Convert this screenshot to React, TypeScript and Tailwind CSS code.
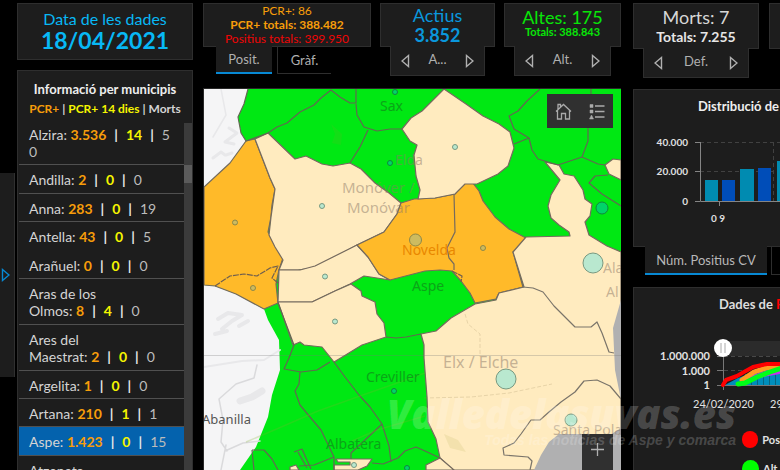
import type { ReactNode } from "react";

type Town = { name: string; pcr?: string; recent?: string; deaths?: string; row: string };

const towns: Town[] = [
  { name: "Alzira:", pcr: "3.536", recent: "14", deaths: "5 0", row: "h-[42px] pt-[3px] border-[#505050]" },
  { name: "Andilla:", pcr: "2", recent: "0", deaths: "0", row: "h-[29px] pt-1.5 border-[#505050]" },
  { name: "Anna:", pcr: "283", recent: "0", deaths: "19", row: "h-[28px] pt-1.5 border-[#505050]" },
  { name: "Antella:", pcr: "43", recent: "0", deaths: "5", row: "h-[29px] pt-1.5 border-transparent" },
  { name: "Arañuel:", pcr: "0", recent: "0", deaths: "0", row: "h-[28px] pt-1.5 border-[#505050]" },
  { name: "Aras de los Olmos:", pcr: "8", recent: "4", deaths: "0", row: "h-[46px] pt-1.5 border-[#505050]" },
  { name: "Ares del Maestrat:", pcr: "2", recent: "0", deaths: "0", row: "h-[46px] pt-1.5 border-[#505050]" },
  { name: "Argelita:", pcr: "1", recent: "0", deaths: "0", row: "h-[28px] pt-1.5 border-[#505050]" },
  { name: "Artana:", pcr: "210", recent: "1", deaths: "1", row: "h-[28px] pt-1.5 border-[#505050]" },
  { name: "Aspe:", pcr: "1.423", recent: "0", deaths: "15", row: "h-[29px] pt-1.5 border-[#505050] bg-[#0462ad]" },
  { name: "Atzeneta", row: "h-[28px] pt-1.5 border-[#505050]" },
];

const panel = "border border-[#2e2e2e] bg-[#1d1d1d]";

function Arrow({ left }: { left?: boolean }) {
  return (
    <svg width="9" height="14" viewBox="0 0 9 14" fill="none" stroke="currentColor" strokeWidth="1.4" aria-hidden="true">
      <path d={left ? "M7.5 1.5V12.5L1 7Z" : "M1.5 1.5V12.5L8 7Z"} />
    </svg>
  );
}

function Pager({ label }: { label: string }) {
  return (
    <div className="mx-2.5 -mt-px flex h-[30px] items-center justify-between border border-t-0 border-[#2e2e2e] bg-[#1d1d1d] px-2.5 text-[#b0b0b0]">
      <button type="button" aria-label="Anterior"><Arrow left /></button>
      <span className="pb-1 text-[13px] leading-4">{label}</span>
      <button type="button" aria-label="Següent"><Arrow /></button>
    </div>
  );
}

function StatCard({ children, label, className }: { children: ReactNode; label: string; className: string }) {
  return (
    <section>
      <div className={`${panel} text-center ${className}`}>{children}</div>
      <Pager label={label} />
    </section>
  );
}

function Separator() {
  return <span className="mx-2 font-bold text-[#e8e8e8]">|</span>;
}

const GREEN = "#00e813";
const CREAM = "#ffebbf";
const ORANGE = "#ffba29";

function MapDrawing() {
  return (
    <svg className="block h-full w-full" viewBox="204 89 417 381" preserveAspectRatio="xMidYMin slice" role="img" aria-label="Mapa de municipis">
      <rect x="204" y="89" width="417" height="381" fill={GREEN} />
      <path d="M204 89H248L244 104 238 117 241 133 246 141 230 163 204 187Z" fill="#f5f5f6" />
      <path d="M204 285L215 286 236 294 264 309 268 320 279 340 280 370 272 395 268 417 256 447 240 470H204Z" fill="#f5f5f6" />
      <g fill="none" stroke="#e8e8ea" strokeLinecap="round" strokeLinejoin="round">
        <path d="M221 89l5 26-13 22" strokeWidth="1.5" />
        <path d="M229 128l8 5-12 9 9 2M213 158l8-6 4 3M226 155l6-2" strokeWidth="3" />
        <path d="M218 319l10-6 14 2-10 6-10 8M248 321l-9 5M215 334l12-3" strokeWidth="4" />
        <path d="M280 350l-16 10-22 1-38 6" strokeWidth="2" />
        <path d="M240 401l12-4 10-6" strokeWidth="7" />
        <path d="M257 365l-3 13-18 6-17 15 4 21-2 22 6 9M225 451l18-8 17-2M226 445l-5 25" stroke="#dadadc" strokeWidth="1.5" />
      </g>

      <g stroke="#756a5e" strokeWidth="1.2" strokeLinejoin="round">
        <path d="M204 187L230 163 246 141 255 139 270 178 275 189 272 205 271 217 268 232 274 242 283 258 279 270 276 284 278 303 264 309 236 294 215 286 204 285Z" fill={ORANGE} />
        <path d="M255 139L268 133 295 159 306 156 322 164 333 166 350 163 361 169 375 183 389 193 401 203 397 214 384 232 357 245 326 262 312 268 298 270 279 270 283 260 275 247 269 235 271 217 275 189 270 178Z" fill={CREAM} />
        <path d="M279 270H300L315 266 357 245 368 257 379 274 390 280 364 276 350 284 335 291 312 302 278 302Z" fill={CREAM} />
        <path d="M278 302H312L335 291 351 284 361 291 362 296 375 302 377 314 384 323 386 337 362 345 344 356 334 362 322 347 304 345 300 342 293 345Z" fill={CREAM} />
        <path d="M357 245L384 232 397 214 401 203 414 199 435 198 455 194 463 184 472 182 479 191 483 201 495 217 509 229 526 238 520 247 513 252 523 287 499 293 496 299 475 303 470 293 461 281 452 271 440 270 425 271 390 280 379 274 368 257Z" fill={ORANGE} />
        <path d="M418 199L420 190 416 176 414 155 417 145 410 141 402 129 411 118 422 111 444 89 466 104 483 116 499 124 510 132 514 148 508 166 498 174 477 184 465 184 455 194 435 198Z" fill={CREAM} />
        <path d="M545 162L559 165 564 174 574 176 583 190 585 199 592 204 590 216 585 222 589 235 607 246 621 252V470H453L440 458 436 439 428 422 427 397 424 358 424 345 421 334 436 331 451 318 475 304 496 300 499 293 524 287 513 252 526 237 570 236 569 232 559 225 551 218 548 206 551 195 560 180Z" fill={CREAM} />
        <path d="M621 160L613 159 605 165 609 174 621 180Z" fill={CREAM} />
        <path d="M440 458L426 465V470H454Z" fill={CREAM} />
        <path d="M336 459H372L367 466 358 470H334V465H350V462H338Z" fill={CREAM} />
        <path d="M290 467l6-2 3 5h-9Z" fill={CREAM} />
      </g>
      <path d="M454 194L455 232 447 248 449 258 454 264 454 270" fill="none" stroke="#756a5e" strokeWidth="1.2" />

      <path d="M621 300L613 328 615 370 621 400ZM621 428L610 435 583 434 559 434 549 442 541 455 534 470H621Z" fill="#b0b0b1" />
      <path d="M204 355.500H621" stroke="#777" strokeOpacity=".3" />

      <g fill="none" stroke="#626852" strokeWidth="1.2" strokeLinejoin="round">
        <path d="M248 89L244 104 238 117 241 133 246 141 268 133 277 127 287 123 300 112 314 105 321 98 331 90 340 97 350 103H356V89M356 104L357 115 364 127 377 131 390 129 402 129M368 130L360 147 350 163" />
        <path d="M540 89L527 101 518 111 509 116 514 129 529 138 532 150 538 159 558 165 582 157 588 141 588 125 584 110 591 100V89M514 144L529 138M582 157L598 164 605 165M608 175L595 176 589 183 602 194 621 206" />
        <path d="M278 303L294 345 289 358 284 369 301 372 317 370 330 362M300 372L299 384 295 391 300 405 310 417 321 430 334 457M334 362L345 377 359 395 370 407 382 424 389 446 391 462M386 337L396 338 406 337 421 334M382 424L365 440 351 453V459M440 458L425 451 416 447 405 451 398 458 383 464 372 463M334 457L314 465 299 466M334 457V470M252 450L264 450 272 459 278 470M252 450L254 470M294 452l8-3 9 20M298 452l9 16" />
        <path d="M523 287L533 288 543 292 554 306 575 327 591 327 597 322 602 333 609 352 614 353M621 399L610 386 597 380 584 381 575 392 561 402 549 412 540 420 531 420 521 434 514 443 503 448 504 455 528 457 532 461 530 470" stroke="#7a746a" />
        <path d="M215 286L230 276 244 274 257 276 270 268 278 266 272 278 278 283M452 271L462 276 461 282" stroke="#705f4e" strokeDasharray="6 1" />
      </g>
      <g fill="none" stroke="#7fae30" strokeOpacity=".25">
        <path d="M246 442L279 428 318 411 360 396 400 382 425 373M352 441l25-11 48-14" strokeWidth="1.5" />
        <path d="M465 314l3 10 12 10v23M424 398l47-1 38-4 43-9" stroke="#a08a60" strokeDasharray="4 2" />
      </g>
      <path d="M331 124l11 10-1 11-9-2 3-9ZM444 434l14 6 8 12-16-4Z" fill="#a0a030" fillOpacity=".12" />

      <g fill="#b9e8cf" stroke="#789981">
        <circle cx="322" cy="206" r="2.5" /><circle cx="455" cy="147" r="2.5" /><circle cx="325" cy="276.500" r="2.5" /><circle cx="335" cy="321.500" r="2.5" />
        <circle cx="593" cy="263" r="10" /><circle cx="506" cy="379" r="10" /><circle cx="571" cy="420" r="6" /><circle cx="354" cy="465" r="2.5" />
      </g>
      <g fill="#cdbb60" stroke="#8d8848">
        <circle cx="235" cy="222.500" r="2.5" /><circle cx="253" cy="288" r="2.5" /><circle cx="483" cy="248" r="2.5" /><circle cx="415.500" cy="240" r="6" />
      </g>
      <g fill="#00d469" stroke="#11863f">
        <circle cx="395" cy="92" r="2.5" /><circle cx="390" cy="163" r="2.5" /><circle cx="602" cy="208" r="6" /><circle cx="394" cy="391" r="2.5" /><circle cx="407" cy="468" r="2.5" />
      </g>

      <g fontFamily="'Noto Sans', sans-serif" fontSize="14">
        <g fill="#0ba518">
          <text x="380" y="111">Sax</text><text x="412" y="291">Aspe</text><text x="366" y="382">Creviller</text><text x="326" y="449">Albatera</text>
        </g>
        <g fill="#8c7868" fillOpacity=".5">
          <text x="395" y="165">Elda</text>
          <text x="342" y="193" fontSize="15">Monóver /</text><text x="347" y="213" fontSize="15">Monóvar</text>
          <text x="443" y="368" fontSize="16">Elx / Elche</text>
          <text x="603" y="273">Ala</text><text x="606" y="297">Al</text><text x="553" y="435">Santa Pola</text>
        </g>
        <text x="402" y="255" fill="#e98700">Novelda</text>
        <text x="202" y="424" fill="#555" fontSize="13">Abanilla</text>
      </g>
    </svg>
  );
}

function MapPanel() {
  return (
    <section className="relative min-h-0 flex-1 overflow-hidden border-l border-t border-[#282828]">
      <MapDrawing />
      <div className="absolute right-2 top-[5px] flex h-[34px] w-[66px] items-center justify-around bg-[#303030] text-[#aaa]">
        <button type="button" aria-label="Inici">
          <svg width="17" height="17" viewBox="0 0 17 17" fill="none" stroke="currentColor" strokeWidth="1.3"><path d="M1 8.500L8.500 1.500 16 8.500M2.500 7.500V16H6.500V10.500H10.500V16H14.500V7.500M3 6V1.500H5.500V4" /></svg>
        </button>
        <button type="button" aria-label="Llegenda">
          <svg width="16" height="17" viewBox="0 0 16 17" fill="none" stroke="currentColor"><path d="M6 3H15.500M6 8.500H15.500M6 14H15.500" strokeWidth="1.4" /><path d="M1 1.500h3v3H1ZM1 7h3v3H1ZM2.500 12l2 4h-4Z" fill="currentColor" strokeWidth=".5" /></svg>
        </button>
      </div>
      <button type="button" aria-label="Apropa" className="absolute bottom-0 right-2 flex h-9 w-[31px] items-center justify-center bg-[#303030] pb-1.5 text-[#b0b0b0]">
        <svg width="13" height="13" viewBox="0 0 13 13" stroke="currentColor" strokeWidth="1.3"><path d="M6.500 0V13M0 6.500H13" /></svg>
      </button>
    </section>
  );
}

function BarChart() {
  return (
    <svg className="block w-[147px] max-w-none" height="120" viewBox="634 126 147 120" role="img" aria-label="Distribució per edats">
      <path d="M700 142.500H893M700 171.500H893M773.500 142V201" stroke="#414141" strokeDasharray="4 3" />
      <g fill="#008bb1"><rect x="705" y="180" width="13" height="21" /><rect x="740" y="169" width="14" height="32" /><rect x="777" y="161" width="14" height="40" /></g>
      <g fill="#004db8"><rect x="722" y="180" width="13" height="21" /><rect x="758" y="168" width="13" height="33" /></g>
      <path d="M700.500 142V201.500H893M695 142.500H700M695 171.500H700M695 201.500H700M719.500 201V206" fill="none" stroke="#858585" />
      <g fill="#e0e0e0" fontFamily="Lato, sans-serif" fontSize="10" fontWeight="700">
        <g textAnchor="end"><text x="688" y="146">40.000</text><text x="688" y="175">20.000</text><text x="688" y="205">0</text></g>
        <text x="711" y="222">0 9</text>
      </g>
    </svg>
  );
}

function TrendChart() {
  return (
    <svg className="block w-[147px] max-w-none" height="101" viewBox="634 325 147 101" role="img" aria-label="Evolució de les dades">
      <rect x="723" y="342" width="170" height="15" fill="#2b2b2b" />
      <path d="M717 357.500H893M717 371.500H893" stroke="#484848" strokeDasharray="4 3" />
      <path d="M725 386L738 379 752 374 770 370H893V386Z" fill="#008ebc" />
      <path d="M745.500 375v11M751.500 373v13M757.500 372v14M763.500 371v15M769.500 370v16M775.500 369v17" stroke="#086580" />
      <path d="M723.500 357V391M717 357.500H723M717 371.500H723M717 386.500H893" stroke="#777" />
      <g fill="none" strokeLinejoin="round" strokeLinecap="round">
        <path d="M748 380L765 375 782 372" stroke="#c82ef0" strokeWidth="5" />
        <path d="M742 381L754 373 766 369 782 367" stroke="#ff9d22" strokeWidth="5" />
        <path d="M738 385L745 384 757 378 770 373 782 369" stroke="#00ff17" strokeWidth="5" />
        <path d="M723 386L726 381 737 377 744 373 753 368 767 365 782 365" stroke="#f00" strokeWidth="4" />
      </g>
      <circle cx="723" cy="349" r="9" fill="#fff" /><path d="M721 344v10M725 344v10" stroke="#aaa" />
      <g fill="#e2e2e2" fontFamily="Lato, sans-serif" fontSize="11">
        <g textAnchor="end" fontWeight="700"><text x="710" y="361">1.000.000</text><text x="710" y="376">1.000</text><text x="710" y="390">1</text></g>
        <text x="693" y="409">24/02/2020</text><text x="770" y="409">29</text>
      </g>
    </svg>
  );
}

export default function App() {
  return (
    <main className="relative grid h-screen w-full grid-cols-[15px_178px_minmax(0,428fr)_minmax(0,159fr)] grid-rows-[minmax(0,1fr)] overflow-hidden bg-black font-['Lato','Liberation_Sans',sans-serif] text-[#d4d4d4]">
      <aside className="flex items-center pt-20">
        <button type="button" aria-label="Mostra el panell" className="flex h-[204px] w-full items-center justify-end border-r border-[#303030] bg-[#1d1d1d] pr-1 text-[#0789d4]"><Arrow /></button>
      </aside>

      <div className="flex min-h-0 flex-col gap-2.5 pl-0.5 pt-[3px]">
        <section className={`${panel} h-[57px] shrink-0 pt-1.5 text-center text-[#08b8f5]`}>
          <h1 className="text-base leading-[18px]">Data de les dades</h1>
          <p className="text-[23px] font-bold leading-[25px]">18/04/2021</p>
        </section>
        <section className={`${panel} flex min-h-0 flex-1 flex-col border-b-0 pt-2`}>
          <h2 className="text-center text-[13px] font-bold leading-5 text-[#eee]">Informació per municipis</h2>
          <p className="whitespace-nowrap pb-1 text-center text-xs font-bold leading-5">
            <span className="text-[#f79d0a]">PCR+</span> | <span className="text-[#f5f500]">PCR+ 14 dies</span> | <span>Morts</span>
          </p>
          <div className="flex min-h-0 flex-1">
            <ul className="min-w-0 flex-1 overflow-hidden pl-px">
              {towns.map((t) => (
                <li key={t.name} className={`border-b pl-2.5 pr-2 text-sm leading-[17px] ${t.row}`}>
                  {t.name}
                  {t.pcr && (
                    <>
                      {"\u00a0"}
                      <b className="text-[#f79d0a]">{t.pcr}</b>
                      <Separator />
                      <b className="text-[#f5f500]">{t.recent}</b>
                      <Separator />
                      <span className="text-[#bcbcbc]">{t.deaths}</span>
                    </>
                  )}
                </li>
              ))}
            </ul>
            <div className="w-2 bg-[#3b3b3b] pt-[42px]"><div className="h-[18px] bg-[#5b5b5b]" /></div>
          </div>
        </section>
      </div>

      <div className="flex min-h-0 flex-col pl-2.5 pt-[3px]">
        <div className="grid h-[85px] shrink-0 grid-cols-[168fr_115fr_117fr] gap-[9px]">
          <section>
            <div className={`${panel} h-11 text-center text-xs leading-[14px] text-[#f79d0a]`}>
              <p>PCR+: 86</p>
              <p className="font-bold">PCR+ totals: 388.482</p>
              <p className="text-[#f00505]">Positius totals: 399.950</p>
            </div>
            <div className="-mt-px flex gap-[5px] pl-[13px] text-[13px] leading-6 text-[#b0b0b0]">
              <button type="button" className="h-7 w-14 border-b-2 border-[#0789d4] bg-[#1d1d1d]">Posit.</button>
              <button type="button" className="h-7 w-[54px] border-b border-l border-[#2e2e2e]">Gràf.</button>
            </div>
          </section>
          <StatCard label="A..." className="h-11 pt-px text-[#0a97dc]">
            <p className="text-lg leading-5">Actius</p>
            <p className="text-lg font-bold leading-5">3.852</p>
          </StatCard>
          <StatCard label="Alt." className="h-11 pt-1 text-[#08e508]">
            <p className="text-lg leading-[18px]">Altes: 175</p>
            <p className="text-[11px] font-bold leading-3">Totals: 388.843</p>
          </StatCard>
        </div>
        <MapPanel />
      </div>

      <div className="flex min-h-0 flex-col overflow-hidden pl-3 pt-[3px]">
        <div className="flex h-[86px] shrink-0 gap-2.5">
          <div className="w-[126px] shrink-0">
            <StatCard label="Def." className="h-[46px] pt-px">
              <p className="text-lg leading-6 text-[#d6d6d6]">Morts: 7</p>
              <p className="text-sm font-bold leading-4 text-[#e6e6e6]">Totals: 7.255</p>
            </StatCard>
          </div>
          <div className={`${panel} h-[46px] flex-1 border-r-0`} />
        </div>

        <section className="shrink-0">
          <div className={`${panel} h-[158px] overflow-hidden border-r-0`}>
            <h2 className="whitespace-nowrap pb-3 pl-16 pt-2 text-[13px] font-bold leading-4 text-[#eee]">Distribució de</h2>
            <BarChart />
          </div>
          <div className="-mt-px flex gap-1 overflow-hidden pl-3 text-[13px] leading-[26px]">
            <button type="button" className="h-[29px] w-[122px] shrink-0 whitespace-nowrap border-b-2 border-[#0789d4] bg-[#1d1d1d] text-[#b8b8b8]">Núm. Positius CV</button>
            <button type="button" aria-label="Gràfica següent" className="h-[29px] w-14 shrink-0 border-b border-l border-[#2e2e2e]" />
          </div>
        </section>

        <section className={`${panel} mt-3 min-h-0 flex-1 overflow-hidden border-b-0 border-r-0`}>
          <h2 className="whitespace-nowrap pb-3 pl-[85px] pt-2 text-[13px] font-bold leading-4 text-[#ddd]">Dades de <span className="text-[#f00]">P</span></h2>
          <TrendChart />
          <ul className="pl-[108px] text-[11px] font-bold leading-[29px] text-[#e2e2e2]">
            <li className="flex items-center gap-1"><span className="size-[17px] rounded-full bg-[#f00]" />Pos</li>
            <li className="flex items-center gap-1"><span className="size-[17px] rounded-full bg-[#0f0]" />Alt</li>
          </ul>
        </section>
      </div>

      <div className="pointer-events-none absolute bottom-[22px] right-11 text-right font-['Open_Sans',sans-serif] italic text-white/20">
        <p className="text-[40px] font-extrabold leading-9">Valledelasuvas.es</p>
        <p className="font-['Liberation_Sans',sans-serif] text-sm font-bold leading-4">Todas las noticias de Aspe y comarca</p>
      </div>
    </main>
  );
}
